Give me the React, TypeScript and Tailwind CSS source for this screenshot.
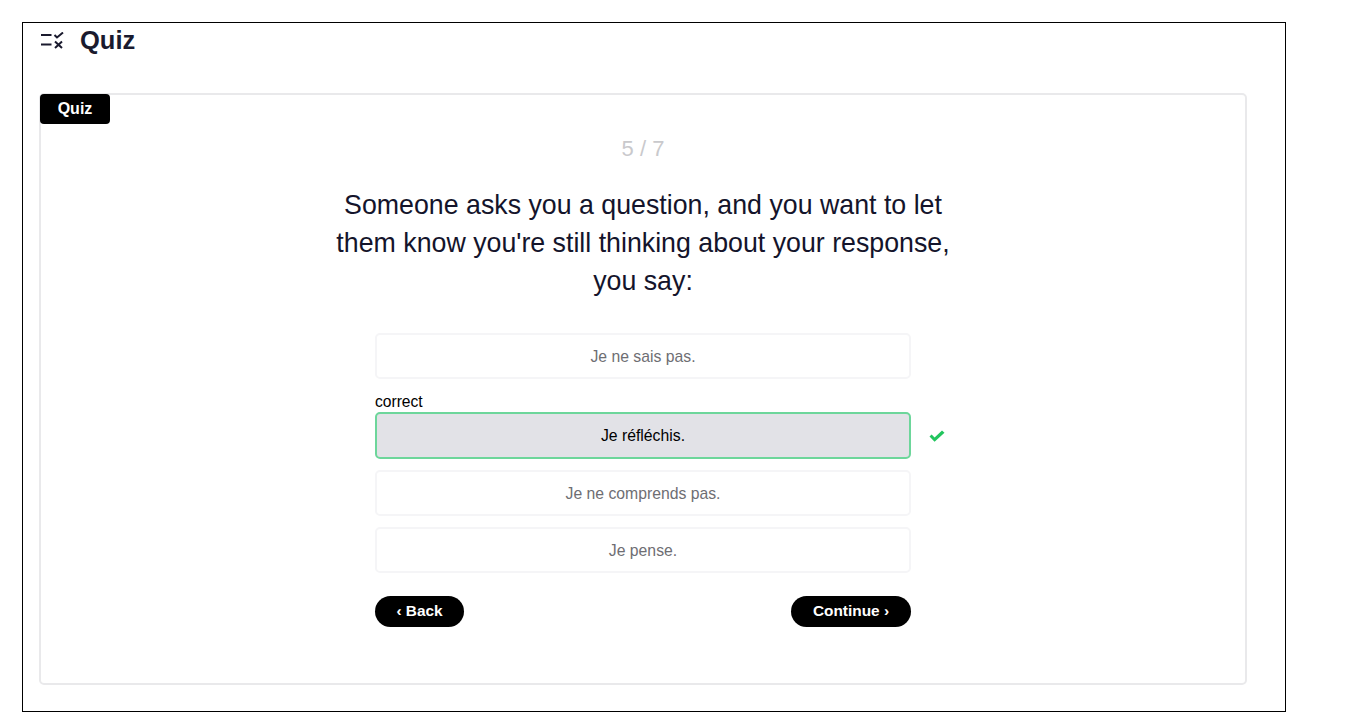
import React from 'react';

const font = { fontFamily: '"Liberation Sans", Arial, sans-serif' };

const QuizIcon = () => (
  <svg width="24" height="17" viewBox="0 0 24 17" fill="none" stroke="#1a1a2e" strokeWidth="2" className="shrink-0">
    <path d="M1 3h10.5M1 12.5h10.5" />
    <path d="M14.5 3l2.5 2.5 6-5" />
    <path d="M15 9.5l7 6.5M22 9.5l-7 6.5" />
  </svg>
);

const Option = ({ label }: { label: string }) => (
  <div className="h-[46px] w-[536px] pt-[1px] flex items-center justify-center rounded-[5px] border-2 border-[#f5f5f7] bg-white text-[15.75px] text-[#6e6e73]">
    {label}
  </div>
);

export default function App() {
  return (
    <div style={font} className="bg-white min-h-[727px] pt-[22px] pl-[22px]">
      <div className="w-[1264px] h-[690px] border border-black pl-[16px]">
        <div className="flex items-center h-[35px] gap-[16px] pl-[1px]">
          <QuizIcon />
          <h1 className="text-[25.5px] font-bold text-[#1a1a2e] leading-none">Quiz</h1>
        </div>

        <div className="relative mt-[35px] w-[1208px] h-[592px] rounded-[5px] border-2 border-[#e9e9eb] flex flex-col items-center">
          <div className="absolute -left-[1px] -top-[1px] w-[70px] h-[30px] rounded-[4px] bg-black text-white text-[16px] font-bold flex items-center justify-center">
            Quiz
          </div>

          <div className="mt-[40px] text-[22px] leading-[28px] text-[#c9c9cc]">5 / 7</div>

          <div className="mt-[23px] w-[640px] text-center text-[26.75px] leading-[38px] text-[#14142b]">
            Someone asks you a question, and you want to let them know you're still thinking about your response, you say:
          </div>

          <div className="mt-[33px] w-[536px] flex flex-col">
            <Option label="Je ne sais pas." />
            <div className="mt-[12px] h-[21px] text-[15.6px] leading-[21px] text-black">correct</div>
            <div className="relative">
              <div className="h-[47px] pt-[1px] flex items-center justify-center rounded-[5px] border-2 border-[#6dd69b] bg-[#e2e2e7] text-[15.75px] text-black">
                Je réfléchis.
              </div>
              <svg width="16" height="12" viewBox="0 0 16 12" className="absolute left-[554px] top-[18px]" fill="#22c55e">
                <path d="M0.5 6.5L2.6 4.4 5.6 7.4 13 0.5 15.5 2.7 5.6 11.8z" />
              </svg>
            </div>
            <div className="mt-[11px]"><Option label="Je ne comprends pas." /></div>
            <div className="mt-[11px]"><Option label="Je pense." /></div>

            <div className="mt-[23px] flex justify-between">
              <button className="h-[31px] w-[89px] pb-[1px] rounded-full bg-black text-white text-[15.4px] font-bold">‹ Back</button>
              <button className="h-[31px] w-[120px] pb-[1px] rounded-full bg-black text-white text-[15.4px] font-bold">Continue ›</button>
            </div>
          </div>
        </div>
      </div>
    </div>
  );
}
